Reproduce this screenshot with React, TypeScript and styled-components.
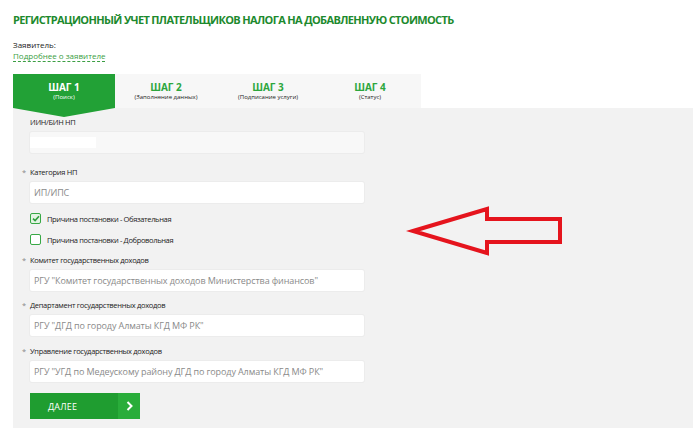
import styled, { createGlobalStyle } from 'styled-components';

const GlobalStyle = createGlobalStyle`
  body {
    margin: 0;
    background: #ffffff;
    font-family: "Open Sans", "Noto Sans", sans-serif;
  }
`;

const Page = styled.div`
  padding: 12px 7px 6px 13px;
`;

const Title = styled.h1`
  margin: 0;
  font-size: 11px;
  line-height: 16px;
  font-weight: 700;
  letter-spacing: -0.65px;
  color: #1d8a2e;
  text-transform: uppercase;
`;

const Applicant = styled.div`
  margin-top: 11px;
  font-size: 8px;
  line-height: 11px;
  color: #222;
`;

const LinkRow = styled.div`
  font-size: 8px;
  line-height: 11px;
`;

const MoreLink = styled.a`
  color: #3b9e43;
  text-decoration: none;
  border-bottom: 1px dashed #3b9e43;
`;

const Tabs = styled.div`
  margin-top: 13px;
  width: 408px;
  height: 34px;
  display: grid;
  grid-template-columns: repeat(4, 1fr);
  background: #f7f7f7;
`;

const Tab = styled.div<{ $active?: boolean }>`
  position: relative;
  display: flex;
  flex-direction: column;
  align-items: center;
  justify-content: center;
  background: ${({ $active }) => ($active ? '#22a136' : 'transparent')};
  color: ${({ $active }) => ($active ? '#ffffff' : '#222')};

  &::after {
    content: '';
    display: ${({ $active }) => ($active ? 'block' : 'none')};
    position: absolute;
    left: 0;
    top: 100%;
    border-left: 51px solid transparent;
    border-right: 51px solid transparent;
    border-top: 9px solid #22a136;
    z-index: 2;
  }
`;

const TabTitle = styled.div<{ $active?: boolean }>`
  font-size: 10px;
  line-height: 12px;
  font-weight: 700;
  color: ${({ $active }) => ($active ? '#ffffff' : '#2ca63d')};
`;

const TabSub = styled.div`
  font-size: 6px;
  line-height: 8px;
`;

const Panel = styled.div`
  position: relative;
  background: #f2f2f2;
  padding: 7px 17px 9px;
  display: flex;
  flex-direction: column;
`;

const Field = styled.div<{ $gap: number }>`
  margin-top: ${({ $gap }) => $gap}px;
  display: flex;
  flex-direction: column;
`;

const Label = styled.label<{ $required?: boolean }>`
  font-size: 7.5px;
  line-height: 14px;
  letter-spacing: -0.3px;
  color: #222;
  margin-bottom: 3px;

  &::before {
    content: '*';
    display: ${({ $required }) => ($required ? 'inline-block' : 'none')};
    width: 8px;
    margin-left: -8px;
    color: #888;
  }
`;

const Input = styled.div<{ $readonly?: boolean }>`
  width: 334px;
  height: 21px;
  box-sizing: border-box;
  padding: 0 4px;
  display: flex;
  align-items: center;
  background: ${({ $readonly }) => ($readonly ? '#f8f8f8' : '#ffffff')};
  border-radius: 2px;
  box-shadow: 0 0 0 1px #ececec;
  font-size: 9px;
  letter-spacing: -0.1px;
  color: #8a8a8a;
  white-space: nowrap;
`;

const Hidden = styled.span`
  margin-left: -4px;
  width: 66px;
  height: 11px;
  background: #ffffff;
`;

const Checks = styled.div`
  margin-top: 5px;
  display: flex;
  flex-direction: column;
`;

const CheckRow = styled.div`
  height: 21px;
  display: flex;
  align-items: center;
  gap: 6px;
  font-size: 7.5px;
  letter-spacing: -0.35px;
  color: #222;
`;

const Box = styled.span<{ $checked?: boolean }>`
  width: 11px;
  height: 11px;
  box-sizing: border-box;
  border: 1px solid #38a845;
  border-radius: 2px;
  background: ${({ $checked }) => ($checked ? '#e4f4e4' : '#ffffff')};
  display: flex;
  align-items: center;
  justify-content: center;
`;

const Button = styled.button`
  margin-top: 11px;
  width: 110px;
  height: 26px;
  padding: 0;
  border: none;
  display: flex;
  background: #1f9d30;
  color: #ffffff;
  font-family: inherit;
  font-size: 9px;
  cursor: pointer;
`;

const ButtonText = styled.span`
  flex: 1;
  display: flex;
  align-items: center;
  padding-left: 18px;
  letter-spacing: 0.2px;
`;

const ButtonArrow = styled.span`
  width: 22px;
  display: flex;
  align-items: center;
  justify-content: center;
  background: #29ad3a;
`;

const Annotation = styled.svg`
  position: absolute;
  left: 392px;
  top: 92px;
`;

const fields = [
  { label: 'Комитет государственных доходов', value: 'РГУ "Комитет государственных доходов Министерства финансов"', gap: 3 },
  { label: 'Департамент государственных доходов', value: 'РГУ "ДГД по городу Алматы КГД МФ РК"', gap: 7 },
  { label: 'Управление государственных доходов', value: 'РГУ "УГД по Медеускому району ДГД по городу Алматы КГД МФ РК"', gap: 8 },
];

const steps = [
  { title: 'ШАГ 1', sub: '(Поиск)' },
  { title: 'ШАГ 2', sub: '(Заполнение данных)' },
  { title: 'ШАГ 3', sub: '(Подписание услуги)' },
  { title: 'ШАГ 4', sub: '(Статус)' },
];

export default function App() {
  return (
    <>
      <GlobalStyle />
      <Page>
        <Title>Регистрационный учет плательщиков налога на добавленную стоимость</Title>
        <Applicant>Заявитель:</Applicant>
        <LinkRow>
          <MoreLink href="#">Подробнее о заявителе</MoreLink>
        </LinkRow>

        <Tabs>
          {steps.map((s, i) => (
            <Tab key={s.title} $active={i === 0}>
              <TabTitle $active={i === 0}>{s.title}</TabTitle>
              <TabSub>{s.sub}</TabSub>
            </Tab>
          ))}
        </Tabs>

        <Panel>
          <Field $gap={0}>
            <Label>ИИН/БИН НП</Label>
            <Input $readonly>
              <Hidden />
            </Input>
          </Field>
          <Field $gap={12}>
            <Label $required>Категория НП</Label>
            <Input>ИП/ИПС</Input>
          </Field>

          <Checks>
            <CheckRow>
              <Box $checked>
                <svg width="8" height="7" viewBox="0 0 8 7">
                  <path d="M1 3.6 L3.1 5.6 L7 1.2" fill="none" stroke="#2f9e3c" strokeWidth="1.6" />
                </svg>
              </Box>
              Причина постановки - Обязательная
            </CheckRow>
            <CheckRow>
              <Box />
              Причина постановки - Добровольная
            </CheckRow>
          </Checks>

          {fields.map((f) => (
            <Field key={f.label} $gap={f.gap}>
              <Label $required>{f.label}</Label>
              <Input>{f.value}</Input>
            </Field>
          ))}

          <Button>
            <ButtonText>ДАЛЕЕ</ButtonText>
            <ButtonArrow>
              <svg width="7" height="10" viewBox="0 0 7 10">
                <path d="M1.5 1 L5.5 5 L1.5 9" fill="none" stroke="#fff" strokeWidth="2" />
              </svg>
            </ButtonArrow>
          </Button>

          <Annotation width="170" height="64" viewBox="0 0 170 64">
            <polygon
              points="8,31 82,9 82,19 155,19 155,42 82,42 82,53"
              fill="none"
              stroke="#e5141d"
              strokeWidth="4"
              strokeLinejoin="miter"
            />
          </Annotation>
        </Panel>
      </Page>
    </>
  );
}
